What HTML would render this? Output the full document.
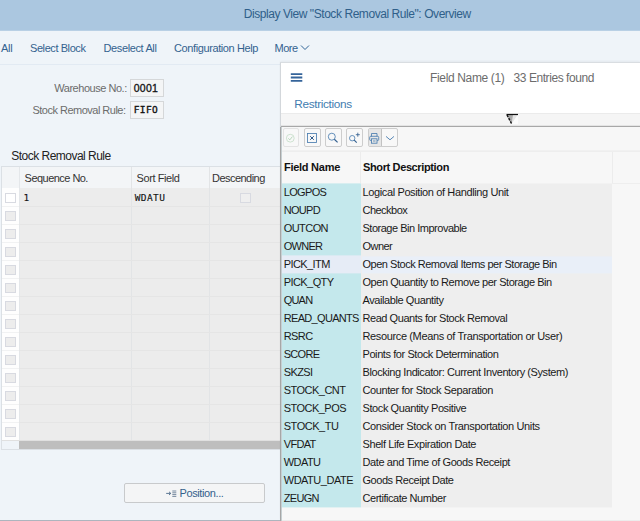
<!DOCTYPE html>
<html><head><meta charset="utf-8">
<style>
*{box-sizing:border-box;margin:0;padding:0}
html,body{width:640px;height:521px;overflow:hidden}
body{background:#eff4f9;font-family:"Liberation Sans",sans-serif;font-size:11px;color:#333;position:relative}
.a{position:absolute}
.t{position:absolute;white-space:nowrap;line-height:1.15}
</style></head><body>
<div class="a" style="left:0px;top:0px;width:640px;height:30px;background:#abc7e0"></div>
<div class="a" style="left:0px;top:30px;width:640px;height:1px;background:#b9d0e5"></div>
<div class="a" style="left:0px;top:64px;width:640px;height:1px;background:#e2eaf3"></div>
<div class="a" style="left:1px;top:166px;width:280px;height:284px;background:#dbe0e5"></div>
<div class="a" style="left:2px;top:167px;width:278px;height:21px;background:#f3f5f7"></div>
<div class="a" style="left:2px;top:188px;width:17px;height:252px;background:#fefefe"></div>
<div class="a" style="left:19px;top:188px;width:261px;height:252px;background:#ececec"></div>
<div class="a" style="left:19px;top:167px;width:1px;height:273px;background:#e4e7ea"></div>
<div class="a" style="left:131px;top:167px;width:1px;height:273px;background:#e2e4e6"></div>
<div class="a" style="left:209px;top:167px;width:1px;height:273px;background:#e2e4e6"></div>
<div class="a" style="left:2px;top:206px;width:17px;height:1px;background:#f1f2f3"></div>
<div class="a" style="left:19px;top:206px;width:261px;height:1px;background:#e5e5e5"></div>
<div class="a" style="left:5px;top:192.8px;width:10.7px;height:10.3px;background:#fff;border:1px solid #d8dae1"></div>
<div class="a" style="left:2px;top:224px;width:17px;height:1px;background:#f1f2f3"></div>
<div class="a" style="left:19px;top:224px;width:261px;height:1px;background:#e5e5e5"></div>
<div class="a" style="left:5px;top:210.8px;width:10.7px;height:10.3px;background:#ededed;border:1px solid #d8dae1"></div>
<div class="a" style="left:2px;top:242px;width:17px;height:1px;background:#f1f2f3"></div>
<div class="a" style="left:19px;top:242px;width:261px;height:1px;background:#e5e5e5"></div>
<div class="a" style="left:5px;top:228.8px;width:10.7px;height:10.3px;background:#ededed;border:1px solid #d8dae1"></div>
<div class="a" style="left:2px;top:260px;width:17px;height:1px;background:#f1f2f3"></div>
<div class="a" style="left:19px;top:260px;width:261px;height:1px;background:#e5e5e5"></div>
<div class="a" style="left:5px;top:246.8px;width:10.7px;height:10.3px;background:#ededed;border:1px solid #d8dae1"></div>
<div class="a" style="left:2px;top:278px;width:17px;height:1px;background:#f1f2f3"></div>
<div class="a" style="left:19px;top:278px;width:261px;height:1px;background:#e5e5e5"></div>
<div class="a" style="left:5px;top:264.8px;width:10.7px;height:10.3px;background:#ededed;border:1px solid #d8dae1"></div>
<div class="a" style="left:2px;top:296px;width:17px;height:1px;background:#f1f2f3"></div>
<div class="a" style="left:19px;top:296px;width:261px;height:1px;background:#e5e5e5"></div>
<div class="a" style="left:5px;top:282.8px;width:10.7px;height:10.3px;background:#ededed;border:1px solid #d8dae1"></div>
<div class="a" style="left:2px;top:314px;width:17px;height:1px;background:#f1f2f3"></div>
<div class="a" style="left:19px;top:314px;width:261px;height:1px;background:#e5e5e5"></div>
<div class="a" style="left:5px;top:300.8px;width:10.7px;height:10.3px;background:#ededed;border:1px solid #d8dae1"></div>
<div class="a" style="left:2px;top:332px;width:17px;height:1px;background:#f1f2f3"></div>
<div class="a" style="left:19px;top:332px;width:261px;height:1px;background:#e5e5e5"></div>
<div class="a" style="left:5px;top:318.8px;width:10.7px;height:10.3px;background:#ededed;border:1px solid #d8dae1"></div>
<div class="a" style="left:2px;top:350px;width:17px;height:1px;background:#f1f2f3"></div>
<div class="a" style="left:19px;top:350px;width:261px;height:1px;background:#e5e5e5"></div>
<div class="a" style="left:5px;top:336.8px;width:10.7px;height:10.3px;background:#ededed;border:1px solid #d8dae1"></div>
<div class="a" style="left:2px;top:368px;width:17px;height:1px;background:#f1f2f3"></div>
<div class="a" style="left:19px;top:368px;width:261px;height:1px;background:#e5e5e5"></div>
<div class="a" style="left:5px;top:354.8px;width:10.7px;height:10.3px;background:#ededed;border:1px solid #d8dae1"></div>
<div class="a" style="left:2px;top:386px;width:17px;height:1px;background:#f1f2f3"></div>
<div class="a" style="left:19px;top:386px;width:261px;height:1px;background:#e5e5e5"></div>
<div class="a" style="left:5px;top:372.8px;width:10.7px;height:10.3px;background:#ededed;border:1px solid #d8dae1"></div>
<div class="a" style="left:2px;top:404px;width:17px;height:1px;background:#f1f2f3"></div>
<div class="a" style="left:19px;top:404px;width:261px;height:1px;background:#e5e5e5"></div>
<div class="a" style="left:5px;top:390.8px;width:10.7px;height:10.3px;background:#ededed;border:1px solid #d8dae1"></div>
<div class="a" style="left:2px;top:422px;width:17px;height:1px;background:#f1f2f3"></div>
<div class="a" style="left:19px;top:422px;width:261px;height:1px;background:#e5e5e5"></div>
<div class="a" style="left:5px;top:408.8px;width:10.7px;height:10.3px;background:#ededed;border:1px solid #d8dae1"></div>
<div class="a" style="left:2px;top:440px;width:17px;height:1px;background:#f1f2f3"></div>
<div class="a" style="left:19px;top:440px;width:261px;height:1px;background:#e5e5e5"></div>
<div class="a" style="left:5px;top:426.8px;width:10.7px;height:10.3px;background:#ededed;border:1px solid #d8dae1"></div>
<div class="a" style="left:240px;top:192.8px;width:10.7px;height:10.3px;background:#efefef;border:1px solid #d8dae1"></div>
<div class="a" style="left:2px;top:440px;width:278px;height:1px;background:#e0e0e0"></div>
<div class="a" style="left:2px;top:441px;width:17px;height:8px;background:#eff4f9"></div>
<div class="a" style="left:19px;top:441px;width:261px;height:8px;background:#bebebe"></div>
<div class="a" style="left:123.5px;top:483px;width:141px;height:20px;background:#f4f5f6;border:1px solid #c8cacc;border-radius:2px"></div>
<div class="a" style="left:130px;top:79px;width:34px;height:18px;background:#f4f5f6;border:1px solid #d5d7d9"></div>
<div class="a" style="left:130px;top:101px;width:34px;height:18.4px;background:#f4f5f6;border:1px solid #d5d7d9"></div>
<div class="a" style="left:280px;top:62px;width:360px;height:459px;background:#fff;box-shadow:0 -1px 2px rgba(0,0,0,0.05);border-left:1px solid #d3d7db;border-top:1px solid #d9dde1"></div>
<div class="a" style="left:281px;top:113px;width:359px;height:12px;background:#f5f5f5;border-top:1px solid #ebebeb"></div>
<div class="a" style="left:281px;top:125px;width:359px;height:1px;background:#e4e4e4"></div>
<div class="a" style="left:281px;top:126px;width:359px;height:1px;background:#a8a8a8"></div>
<div class="a" style="left:281px;top:127px;width:359px;height:394px;background:#f7f7f7"></div>
<div class="a" style="left:281px;top:150px;width:359px;height:1px;background:#f1f1f1"></div>
<div class="a" style="left:281px;top:151px;width:359px;height:1px;background:#eeeeee"></div>
<div class="a" style="left:360px;top:152px;width:1px;height:31px;background:#ececec"></div>
<div class="a" style="left:612px;top:152px;width:1px;height:31px;background:#ececec"></div>
<div class="a" style="left:612px;top:183px;width:28px;height:1px;background:#eeeeee"></div>
<div class="a" style="left:280px;top:127px;width:1px;height:394px;background:#a6a6a6"></div>
<div class="a" style="left:281px;top:127px;width:1px;height:394px;background:#c6cfd2"></div>
<svg class="a" style="left:290px;top:72px" width="14" height="12" viewBox="290 72 14 12"><path d="M290.8 74.1 H302.3 M290.8 77.5 H302.3 M290.8 80.9 H302.3" stroke="#35649a" stroke-width="1.8" fill="none"/></svg>
<div class="a" style="left:282px;top:183px;width:79px;height:324px;background:#c4e8ec;transform:translateY(0.4px)"></div>
<div class="a" style="left:361px;top:183px;width:251px;height:324px;background:#eeeeee;transform:translateY(0.4px)"></div>
<div class="a" style="left:282px;top:255px;width:79px;height:18px;background:#e6ecf6;transform:translateY(0.4px)"></div>
<div class="a" style="left:362px;top:256px;width:250px;height:17px;background:#e9eff8;transform:translateY(0.4px)"></div>
<div class="a" style="left:282.5px;top:128px;width:16.5px;height:19px;background:#f8f8f8;border:1px solid #e3e3e3;border-radius:2px"></div>
<div class="a" style="left:304px;top:128px;width:17px;height:19px;background:#f8f8f8;border:1px solid #cdcdcd;border-radius:2px"></div>
<div class="a" style="left:325px;top:128px;width:17px;height:19px;background:#f8f8f8;border:1px solid #cdcdcd;border-radius:2px"></div>
<div class="a" style="left:346px;top:128px;width:17px;height:19px;background:#f8f8f8;border:1px solid #cdcdcd;border-radius:2px"></div>
<div class="a" style="left:368px;top:128px;width:30px;height:19px;background:#f8f8f8;border:1px solid #cdcdcd;border-radius:2px"></div>
<div class="a" style="left:369px;top:129px;width:12px;height:17px;background:#e6e6e6"></div>
<div class="a" style="left:381px;top:129px;width:1px;height:17px;background:#c2c2c2"></div>
<div class="a" style="left:0px;top:520px;width:280px;height:1px;background:#adb5be"></div>
<div class="a" style="left:282px;top:520px;width:358px;height:1px;background:#ececec"></div>

<svg class="a" style="left:300px;top:44px" width="10" height="8"><path d="M1 1.5 L5 5.5 L9 1.5" fill="none" stroke="#2f6497" stroke-width="1"/></svg>
<svg class="a" style="left:505px;top:113px" width="15" height="12"><polygon points="2,2 12.5,2 6.5,11" fill="#aaa"/><polygon points="8,2 13,2 13,11 6.5,11" fill="#fff" opacity="0.7"/><path d="M1.5 1.5 H13" stroke="#111" stroke-width="1.2" fill="none"/><path d="M2 2 L6.5 10.5" stroke="#111" stroke-width="1.4" fill="none" stroke-dasharray="2.4 1.2"/></svg>
<svg class="a" style="left:164px;top:488px" width="14" height="11" viewBox="164 488 14 11" fill="none"><path d="M166.2 493.4 H170.6 M169 491.8 L170.8 493.4 L169 495" stroke="#4a6888" stroke-width="0.9"/><path d="M172.3 491 H176.3 M172.3 492.8 H176.3 M172.3 494.6 H176.3 M172.3 496.4 H176.3" stroke="#6a7f96" stroke-width="0.9"/></svg>
<svg class="a" style="left:280px;top:124px" width="125" height="28" viewBox="280 124 125 28" fill="none">
<circle cx="290.3" cy="138.2" r="3.9" stroke="#c3dcc5" stroke-width="0.8"/><path d="M288.3 138.3 L289.8 139.9 L292.4 136.6" stroke="#b1d4b4" stroke-width="0.9"/>
<rect x="307.5" y="133.5" width="9" height="9" stroke="#4a7db0" stroke-width="0.85"/><path d="M310.2 136.2 L313.8 139.8 M313.8 136.2 L310.2 139.8" stroke="#2f5a8a" stroke-width="1"/>
<circle cx="331.8" cy="136.7" r="3.5" stroke="#4a7db0" stroke-width="0.85"/><path d="M334.3 139.3 L337.6 142.4" stroke="#34608f" stroke-width="1.2"/>
<circle cx="352.2" cy="138.2" r="2.7" stroke="#4a7db0" stroke-width="0.85"/><path d="M354.2 140.2 L356.7 142.6" stroke="#34608f" stroke-width="1.15"/><path d="M355.8 134.7 H359.8 M357.8 132.7 V136.7" stroke="#34608f" stroke-width="0.85"/>
<path d="M371.5 136.5 V133.5 H377 V136.5" stroke="#4a7db0" stroke-width="0.85"/><rect x="369.7" y="136.3" width="9" height="4.2" rx="1" stroke="#4a7db0" stroke-width="0.85"/><rect x="371.5" y="138.8" width="5.5" height="4.4" stroke="#4a7db0" stroke-width="0.85" fill="#e8e8e8"/><path d="M373 141 H375.5" stroke="#4a7db0" stroke-width="0.8"/>
<path d="M386 136.4 L390 139.8 L394 136.4" stroke="#4a7db0" stroke-width="0.9"/>
</svg>
<div class="t" style="left:243.70px;top:8px;font-size:12px;color:#2f5f8a;letter-spacing:-0.435px">Display View "Stock Removal Rule": Overview</div>
<div class="t" style="left:1.00px;top:42px;font-size:11px;color:#33628f;letter-spacing:-0.245px">All</div>
<div class="t" style="left:30.00px;top:42px;font-size:11px;color:#33628f;letter-spacing:-0.419px">Select Block</div>
<div class="t" style="left:103.50px;top:42px;font-size:11px;color:#33628f;letter-spacing:-0.374px">Deselect All</div>
<div class="t" style="left:174.00px;top:42px;font-size:11px;color:#33628f;letter-spacing:-0.396px">Configuration Help</div>
<div class="t" style="left:274.50px;top:42px;font-size:11px;color:#33628f;letter-spacing:-0.516px">More</div>
<div class="t" style="left:54.25px;top:82px;font-size:11px;color:#6c6c6c;letter-spacing:-0.470px">Warehouse No.:</div>
<div class="t" style="left:32.50px;top:104px;font-size:11px;color:#6c6c6c;letter-spacing:-0.512px">Stock Removal Rule:</div>
<div class="t" style="left:133.75px;top:82px;font-size:10.5px;color:#111;-webkit-text-stroke:0.3px #111;letter-spacing:0.285px">0001</div>
<div class="t" style="left:133.75px;top:104.5px;font-size:9.5px;-webkit-text-stroke:0.12px #111;color:#111;-webkit-text-stroke:0.35px #111;letter-spacing:0.402px;font-family:'DejaVu Sans Mono','Liberation Mono',monospace">FIFO</div>
<div class="t" style="left:11.30px;top:150px;font-size:12px;color:#222;letter-spacing:-0.523px">Stock Removal Rule</div>
<div class="t" style="left:24.60px;top:172px;font-size:11px;color:#333;letter-spacing:-0.535px">Sequence No.</div>
<div class="t" style="left:136.60px;top:172px;font-size:11px;color:#333;letter-spacing:-0.418px">Sort Field</div>
<div class="t" style="left:212.00px;top:172px;font-size:11px;color:#333;letter-spacing:-0.539px">Descending</div>
<div class="t" style="left:23.50px;top:193px;font-size:9.5px;-webkit-text-stroke:0.12px #111;color:#111;letter-spacing:0.766px;font-family:'DejaVu Sans Mono','Liberation Mono',monospace">1</div>
<div class="t" style="left:134.75px;top:193px;font-size:9.5px;-webkit-text-stroke:0.12px #111;color:#111;letter-spacing:0.378px;font-family:'DejaVu Sans Mono','Liberation Mono',monospace">WDATU</div>
<div class="t" style="left:179.50px;top:487px;font-size:11px;color:#34618c;letter-spacing:-0.392px">Position...</div>
<div class="t" style="left:294.30px;top:97.5px;font-size:11.8px;color:#427cb0;letter-spacing:-0.344px">Restrictions</div>
<div class="t" style="left:430.00px;top:71.7px;font-size:12px;color:#6c6c6c;letter-spacing:-0.347px">Field Name (1)</div>
<div class="t" style="left:513.50px;top:71.7px;font-size:12px;color:#6c6c6c;letter-spacing:-0.432px">33 Entries found</div>
<div class="t" style="left:284.00px;top:161px;font-size:11px;color:#111;letter-spacing:-0.269px;font-weight:bold">Field Name</div>
<div class="t" style="left:363.00px;top:161px;font-size:11px;color:#111;letter-spacing:-0.370px;font-weight:bold">Short Description</div>
<div class="t" style="left:283.75px;top:186px;font-size:11px;color:#1a1a1a;letter-spacing:-0.661px">LOGPOS</div>
<div class="t" style="left:362.50px;top:186px;font-size:11px;color:#1a1a1a;letter-spacing:-0.375px">Logical Position of Handling Unit</div>
<div class="t" style="left:283.75px;top:204px;font-size:11px;color:#1a1a1a;letter-spacing:-0.697px">NOUPD</div>
<div class="t" style="left:362.50px;top:204px;font-size:11px;color:#1a1a1a;letter-spacing:-0.521px">Checkbox</div>
<div class="t" style="left:283.75px;top:222px;font-size:11px;color:#1a1a1a;letter-spacing:-0.570px">OUTCON</div>
<div class="t" style="left:362.50px;top:222px;font-size:11px;color:#1a1a1a;letter-spacing:-0.487px">Storage Bin Improvable</div>
<div class="t" style="left:283.75px;top:240px;font-size:11px;color:#1a1a1a;letter-spacing:-0.734px">OWNER</div>
<div class="t" style="left:362.50px;top:240px;font-size:11px;color:#1a1a1a;letter-spacing:-0.531px">Owner</div>
<div class="t" style="left:283.75px;top:258px;font-size:11px;color:#1a1a1a;letter-spacing:-0.592px">PICK_ITM</div>
<div class="t" style="left:362.50px;top:258px;font-size:11px;color:#1a1a1a;letter-spacing:-0.479px">Open Stock Removal Items per Storage Bin</div>
<div class="t" style="left:283.75px;top:276px;font-size:11px;color:#1a1a1a;letter-spacing:-0.582px">PICK_QTY</div>
<div class="t" style="left:362.50px;top:276px;font-size:11px;color:#1a1a1a;letter-spacing:-0.447px">Open Quantity to Remove per Storage Bin</div>
<div class="t" style="left:283.75px;top:294px;font-size:11px;color:#1a1a1a;letter-spacing:-0.820px">QUAN</div>
<div class="t" style="left:362.50px;top:294px;font-size:11px;color:#1a1a1a;letter-spacing:-0.415px">Available Quantity</div>
<div class="t" style="left:283.75px;top:312px;font-size:11px;color:#1a1a1a;letter-spacing:-0.685px">READ_QUANTS</div>
<div class="t" style="left:362.50px;top:312px;font-size:11px;color:#1a1a1a;letter-spacing:-0.448px">Read Quants for Stock Removal</div>
<div class="t" style="left:283.75px;top:330px;font-size:11px;color:#1a1a1a;letter-spacing:-0.605px">RSRC</div>
<div class="t" style="left:362.50px;top:330px;font-size:11px;color:#1a1a1a;letter-spacing:-0.368px">Resource (Means of Transportation or User)</div>
<div class="t" style="left:283.75px;top:348px;font-size:11px;color:#1a1a1a;letter-spacing:-0.725px">SCORE</div>
<div class="t" style="left:362.50px;top:348px;font-size:11px;color:#1a1a1a;letter-spacing:-0.419px">Points for Stock Determination</div>
<div class="t" style="left:283.75px;top:366px;font-size:11px;color:#1a1a1a;letter-spacing:-0.609px">SKZSI</div>
<div class="t" style="left:362.50px;top:366px;font-size:11px;color:#1a1a1a;letter-spacing:-0.424px">Blocking Indicator: Current Inventory (System)</div>
<div class="t" style="left:283.75px;top:384px;font-size:11px;color:#1a1a1a;letter-spacing:-0.519px">STOCK_CNT</div>
<div class="t" style="left:362.50px;top:384px;font-size:11px;color:#1a1a1a;letter-spacing:-0.406px">Counter for Stock Separation</div>
<div class="t" style="left:283.75px;top:402px;font-size:11px;color:#1a1a1a;letter-spacing:-0.533px">STOCK_POS</div>
<div class="t" style="left:362.50px;top:402px;font-size:11px;color:#1a1a1a;letter-spacing:-0.407px">Stock Quantity Positive</div>
<div class="t" style="left:283.75px;top:420px;font-size:11px;color:#1a1a1a;letter-spacing:-0.467px">STOCK_TU</div>
<div class="t" style="left:362.50px;top:420px;font-size:11px;color:#1a1a1a;letter-spacing:-0.372px">Consider Stock on Transportation Units</div>
<div class="t" style="left:283.75px;top:438px;font-size:11px;color:#1a1a1a;letter-spacing:-0.700px">VFDAT</div>
<div class="t" style="left:362.50px;top:438px;font-size:11px;color:#1a1a1a;letter-spacing:-0.409px">Shelf Life Expiration Date</div>
<div class="t" style="left:283.75px;top:456px;font-size:11px;color:#1a1a1a;letter-spacing:-0.553px">WDATU</div>
<div class="t" style="left:362.50px;top:456px;font-size:11px;color:#1a1a1a;letter-spacing:-0.403px">Date and Time of Goods Receipt</div>
<div class="t" style="left:283.75px;top:474px;font-size:11px;color:#1a1a1a;letter-spacing:-0.491px">WDATU_DATE</div>
<div class="t" style="left:362.50px;top:474px;font-size:11px;color:#1a1a1a;letter-spacing:-0.448px">Goods Receipt Date</div>
<div class="t" style="left:283.75px;top:492px;font-size:11px;color:#1a1a1a;letter-spacing:-0.700px">ZEUGN</div>
<div class="t" style="left:362.50px;top:492px;font-size:11px;color:#1a1a1a;letter-spacing:-0.456px">Certificate Number</div>
</body></html>
